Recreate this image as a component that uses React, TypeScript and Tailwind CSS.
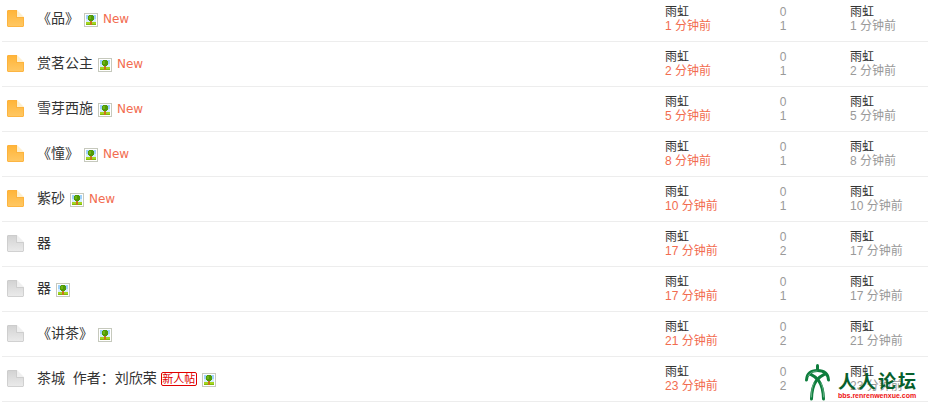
type Thread = {
  id: number;
  title: string;
  minutes: number;
  replies: number;
  views: number;
  isNew?: boolean;
  hasImage?: boolean;
  newcomer?: boolean;
};

const threads: Thread[] = [
  { id: 1, title: "《品》", minutes: 1, replies: 0, views: 1, isNew: true, hasImage: true },
  { id: 2, title: "赏茗公主", minutes: 2, replies: 0, views: 1, isNew: true, hasImage: true },
  { id: 3, title: "雪芽西施", minutes: 5, replies: 0, views: 1, isNew: true, hasImage: true },
  { id: 4, title: "《憧》", minutes: 8, replies: 0, views: 1, isNew: true, hasImage: true },
  { id: 5, title: "紫砂", minutes: 10, replies: 0, views: 1, isNew: true, hasImage: true },
  { id: 6, title: "器", minutes: 17, replies: 0, views: 2 },
  { id: 7, title: "器", minutes: 17, replies: 0, views: 1, hasImage: true },
  { id: 8, title: "《讲茶》", minutes: 21, replies: 0, views: 2, hasImage: true },
  { id: 9, title: "茶城\u00a0 作者：刘欣荣", minutes: 23, replies: 0, views: 2, newcomer: true, hasImage: true },
];

function FolderIcon({ isNew }: { isNew?: boolean }) {
  const id = isNew ? "folder-new" : "folder-common";
  return (
    <svg className="block" width="17" height="17" viewBox="0 0 17 17">
      <defs>
        <linearGradient id={id} x1="0" y1="0" x2="0" y2="1">
          <stop offset="0" stopColor={isNew ? "#ffb437" : "#d2d2d2"} />
          <stop offset="1" stopColor={isNew ? "#ffc864" : "#ebebeb"} />
        </linearGradient>
      </defs>
      <path d="M1 0H10V7H17V16L16 17H1L0 16V1Z" fill={`url(#${id})`} />
      <path
        d="M.5 1V16L1 16.5H16L16.5 16V7.5H9.5V.5H1Z"
        fill="none"
        stroke={isNew ? "#fdb03a" : "#cbcbcb"}
        strokeOpacity="0.8"
      />
      <path d="M10 0L17 7H10Z" fill={isNew ? "#fff0cd" : "#f0f0f0"} />
    </svg>
  );
}

function ImageIcon() {
  return (
    <svg className="mt-[5px] block" width="14" height="14" viewBox="0 0 14 14" shapeRendering="crispEdges">
      <path d="M0 0H14V14H0Z" fill="#c6c9bd" />
      <path d="M1 1H13V13H1Z" fill="#fff" />
      <path d="M2 2H12V6H2Z" fill="#9fd2fb" />
      <path d="M2 6H12V10H2Z" fill="#d3ecfd" />
      <path d="M2 9H12V12H2Z" fill="#a5d61f" />
      <path d="M2 11H12V12H2Z" fill="#7fb80e" />
      <path d="M6 8H8V12H6Z" fill="#c9751d" />
      <path d="M5 2H9V3H10V7H9V8H5V7H4V3H5Z" fill="#4f9a08" />
      <path d="M5 3H7V6H5Z" fill="#6fb414" />
    </svg>
  );
}

function Watermark() {
  return (
    <div className="pointer-events-none absolute right-3 bottom-1.5 flex items-start gap-2">
      <svg width="25" height="37" viewBox="0 0 25 37" fill="none" stroke="#0d7d3c" strokeLinecap="round">
        <path d="M12.500 1.500V5" strokeWidth="3" />
        <path d="M1.500 16C2 10 6 6.500 12.500 6.500S23 10 23.500 16" strokeWidth="3" />
        <path d="M5 10C10 12.500 18 16 18.500 35" strokeWidth="3" />
        <path d="M20 10C15 12.500 7 16 6.500 35" strokeWidth="3" />
        <path d="M3 12C5 9 8 7 12 7M6.500 33C6.500 27 7 23 9 19M18.500 33C18.500 27 18 23 16 19" stroke="#5fae80" strokeWidth="1" />
      </svg>
      <div className="w-[78px] pt-2">
        <div className="flex justify-between text-[18px] leading-5 font-bold text-[#07602c]">
          <span>人</span>
          <span>人</span>
          <span>论</span>
          <span>坛</span>
        </div>
        <div className="text-[7px] leading-2 font-bold text-[#ee1111]">bbs.renrenwenxue.com</div>
      </div>
    </div>
  );
}

export default function App() {
  return (
    <div className="relative bg-white pb-[5px] pl-0.5 font-['Liberation_Sans','Noto_Sans_CJK_SC',sans-serif] text-xs leading-[14px] text-[#999]">
      <table className="w-full table-fixed border-collapse">
        <colgroup>
          <col className="w-[35px]" />
          <col />
          <col className="w-[88px]" />
          <col className="w-[60px]" />
          <col className="w-[115px]" />
        </colgroup>
        <tbody>
          {threads.map((thread) => (
            <tr key={thread.id} className="h-[45px] border-b border-[#ededed] align-bottom first:h-[41px]">
              <td className="pb-3.5 pl-[5px]">
                <FolderIcon isNew={thread.isNew} />
              </td>
              <th className="pb-[13px] text-left font-normal">
                <div className="flex items-center">
                  <a href="#" className="text-sm leading-5 whitespace-pre text-[#333]">
                    {thread.title}
                  </a>
                  {thread.newcomer && (
                    <span className="mt-[3px] ml-1 h-3.5 w-9 rounded-xs border border-[#e00000] text-center text-[11px] leading-3 text-[#e00000]">
                      新人帖
                    </span>
                  )}
                  {thread.hasImage && (
                    <span className="ml-[5px]">
                      <ImageIcon />
                    </span>
                  )}
                  {thread.isNew && (
                    <a href="#" className="mt-0.5 ml-[5px] font-['DejaVu_Sans',sans-serif] text-[#f26c4f]">
                      New
                    </a>
                  )}
                </div>
              </th>
              <td className="pb-2">
                <a href="#" className="block text-[#333]">雨虹</a>
                <span className="block text-[#f26c4f]">{thread.minutes} 分钟前</span>
              </td>
              <td className="pb-2 text-center">
                <a href="#" className="block">{thread.replies}</a>
                <span className="block">{thread.views}</span>
              </td>
              <td className="pb-2 pl-[37px]">
                <a href="#" className="block text-[#333]">雨虹</a>
                <a href="#" className="block whitespace-nowrap">{thread.minutes} 分钟前</a>
              </td>
            </tr>
          ))}
        </tbody>
      </table>
      <Watermark />
    </div>
  );
}
